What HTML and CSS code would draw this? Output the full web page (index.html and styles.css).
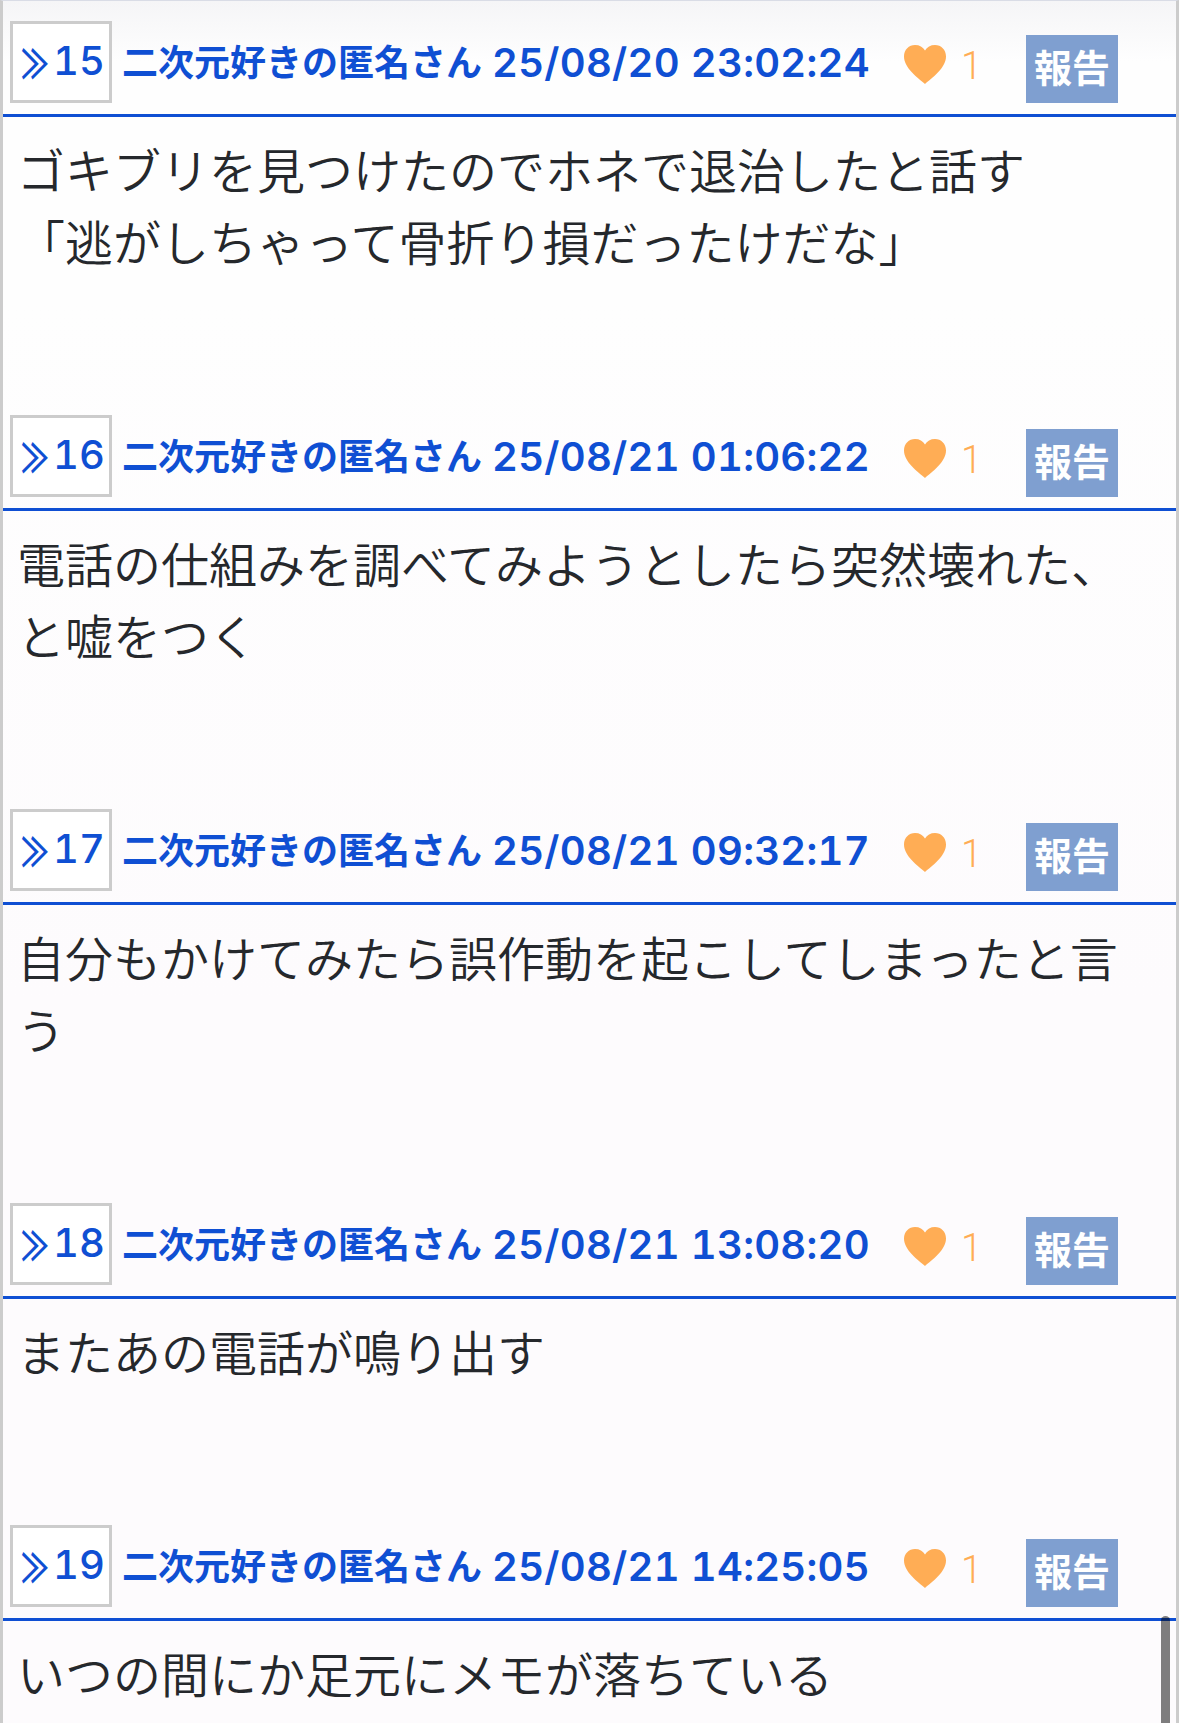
FILE: index.html
```html
<!DOCTYPE html>
<html lang="ja">

<head>
    <meta charset="UTF-8">
    <meta name="viewport" content="width=device-width, initial-scale=1.0">
    <title>レス一覧</title>
    <link rel="stylesheet" href="styles.css">
</head>

<body>
    <svg width="0" height="0" class="defs">
        <symbol id="heart" viewBox="0 0 42 39">
            <path d="M21 39C14 33 0 23 0 11.500C0 4.500 5 0 11 0C15.500 0 19 2 21 5.500C23 2 26.500 0 31 0C37 0 42 4.500 42 11.500C42 23 28 33 21 39Z" />
        </symbol>
    </svg>

    <div id="thread">
        <div class="res">
            <div class="res-head">
                <a class="res-no"><span class="arrow">≫</span>15</a>
                <span class="res-name">二次元好きの匿名さん</span>
                <span class="res-date">25/08/20 23:02:24</span>
                <span class="like"><svg class="heart"><use href="#heart" /></svg><span class="like-count">1</span></span>
                <a class="report">報告</a>
            </div>
            <div class="res-body">ゴキブリを見つけたのでホネで退治したと話す<br>「逃がしちゃって骨折り損だったけだな」</div>
        </div>

        <div class="res">
            <div class="res-head">
                <a class="res-no"><span class="arrow">≫</span>16</a>
                <span class="res-name">二次元好きの匿名さん</span>
                <span class="res-date">25/08/21 01:06:22</span>
                <span class="like"><svg class="heart"><use href="#heart" /></svg><span class="like-count">1</span></span>
                <a class="report">報告</a>
            </div>
            <div class="res-body">電話の仕組みを調べてみようとしたら突然壊れた、<br>と嘘をつく</div>
        </div>

        <div class="res">
            <div class="res-head">
                <a class="res-no"><span class="arrow">≫</span>17</a>
                <span class="res-name">二次元好きの匿名さん</span>
                <span class="res-date">25/08/21 09:32:17</span>
                <span class="like"><svg class="heart"><use href="#heart" /></svg><span class="like-count">1</span></span>
                <a class="report">報告</a>
            </div>
            <div class="res-body">自分もかけてみたら誤作動を起こしてしまったと言う</div>
        </div>

        <div class="res">
            <div class="res-head">
                <a class="res-no"><span class="arrow">≫</span>18</a>
                <span class="res-name">二次元好きの匿名さん</span>
                <span class="res-date">25/08/21 13:08:20</span>
                <span class="like"><svg class="heart"><use href="#heart" /></svg><span class="like-count">1</span></span>
                <a class="report">報告</a>
            </div>
            <div class="res-body">またあの電話が鳴り出す</div>
        </div>

        <div class="res">
            <div class="res-head">
                <a class="res-no"><span class="arrow">≫</span>19</a>
                <span class="res-name">二次元好きの匿名さん</span>
                <span class="res-date">25/08/21 14:25:05</span>
                <span class="like"><svg class="heart"><use href="#heart" /></svg><span class="like-count">1</span></span>
                <a class="report">報告</a>
            </div>
            <div class="res-body">いつの間にか足元にメモが落ちている</div>
        </div>

        <div class="scroll-thumb"></div>
    </div>
</body>

</html>
```
FILE: styles.css
```css
* {
    margin: 0;
    padding: 0;
    box-sizing: border-box;
}

html,
body {
    height: 100%;
    overflow: hidden;
}

body {
    background: #fdfbfd;
    font-family: "Noto Sans CJK JP", sans-serif;
    color: #25282c;
}

.defs {
    position: absolute;
}

#thread {
    position: relative;
    height: 1723px;
    overflow: hidden;
    border-top: 1px solid #d9dce6;
    border-left: 3px solid #ccc;
    border-right: 3px solid #ccc;
    background: linear-gradient(#f5f5f7 0, #fefefe 60px, #fefefe 300px, #fdfbfd 1000px);
}

.res-head {
    display: flex;
    align-items: flex-end;
    height: 116px;
    padding: 20px 0 11px 7px;
    border-bottom: 3px solid #0f4fd3;
    color: #0f4fd3;
}

.res-no {
    display: block;
    width: 102px;
    height: 82px;
    border: 3px solid #ccc;
    background: #fff;
    font-family: Inter, sans-serif;
    font-variant-numeric: tabular-nums;
    font-weight: 500;
    font-size: 40px;
    line-height: 74px;
    padding-left: 8px;
    white-space: nowrap;
}

.arrow {
    display: inline-block;
    width: 32px;
    font-family: "Noto Sans CJK JP", sans-serif;
    font-weight: 700;
    font-size: 30px;
    line-height: 30px;
    transform: scale(.92, 1.35);
    transform-origin: 0 55%;
}

.res-name {
    margin: 0 0 2px 10px;
    font-size: 36px;
    font-weight: 700;
    line-height: 82px;
    white-space: nowrap;
}

.res-date {
    margin-left: 10px;
    font-family: Inter, sans-serif;
    font-variant-numeric: tabular-nums;
    font-weight: 600;
    font-size: 40px;
    letter-spacing: .28px;
    line-height: 80px;
    white-space: nowrap;
}

.like {
    display: flex;
    align-items: center;
    margin-left: 34px;
    height: 78px;
    color: #ffad55;
}

.heart {
    width: 42px;
    height: 39px;
    fill: #ffad55;
}

.like-count {
    margin-left: 15px;
    padding-top: 3px;
    font-family: Roboto, sans-serif;
    font-weight: 300;
    font-size: 38px;
}

.report {
    display: block;
    width: 92px;
    height: 68px;
    margin-left: 44px;
    background: #7f9fd0;
    color: #fff;
    font-size: 38px;
    font-weight: 700;
    line-height: 62px;
    text-align: center;
}

.res-body {
    padding: 15px 0 119px 14px;
    font-size: 48px;
    font-weight: 350;
    line-height: 72px;
    width: 1140px;
}

.scroll-thumb {
    position: absolute;
    top: 1615px;
    right: 6px;
    width: 9px;
    height: 120px;
    border-radius: 5px;
    background: rgba(0, 0, 0, .5);
}
```
